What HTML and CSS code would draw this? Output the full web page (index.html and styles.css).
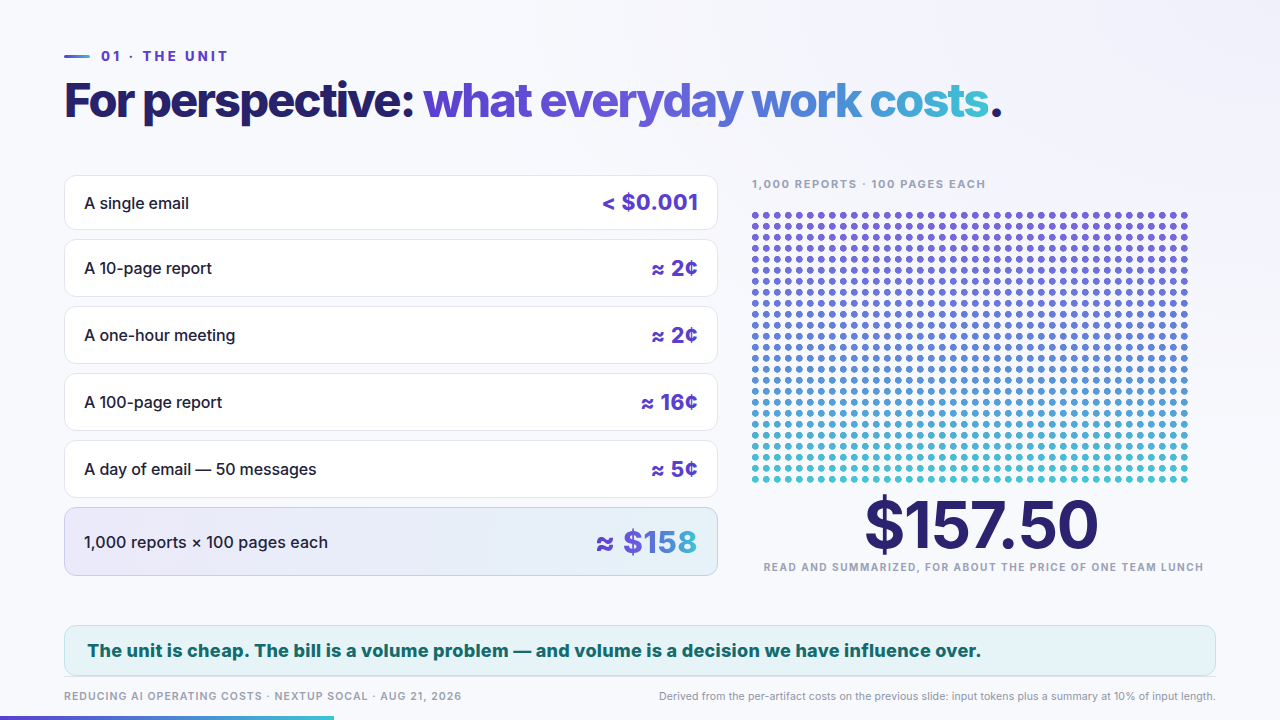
FILE: index.html
```html
<!DOCTYPE html>
<html lang="en">
<head>
<meta charset="utf-8">
<title>For perspective: what everyday work costs</title>
<link rel="stylesheet" href="styles.css">
</head>
<body>
<div class="slide">
  <div class="eyebrow"><span class="eyebrow-line"></span><span class="eyebrow-text">01 · THE UNIT</span></div>
  <h1 class="title">For perspective: <span class="grad">what everyday work costs</span>.</h1>

  <div class="main">
    <div class="rows">
      <div class="row"><span class="row-label">A single email</span><span class="row-value">&lt; $0.001</span></div>
      <div class="row"><span class="row-label">A 10-page report</span><span class="row-value">≈ 2¢</span></div>
      <div class="row"><span class="row-label">A one-hour meeting</span><span class="row-value">≈ 2¢</span></div>
      <div class="row"><span class="row-label">A 100-page report</span><span class="row-value">≈ 16¢</span></div>
      <div class="row"><span class="row-label">A day of email — 50 messages</span><span class="row-value">≈ 5¢</span></div>
      <div class="row row-total"><span class="row-label">1,000 reports × 100 pages each</span><span class="row-value"><span class="grad">≈ $158</span></span></div>
    </div>

    <div class="panel">
      <div class="panel-label">1,000 REPORTS · 100 PAGES EACH</div>
      <div class="dots" role="img" aria-label="1,000 dots, one per report"></div>
      <div class="big">$157.50</div>
      <div class="caption">READ AND SUMMARIZED, FOR ABOUT THE PRICE OF ONE TEAM LUNCH</div>
    </div>
  </div>

  <div class="callout">The unit is cheap. The bill is a volume problem — and volume is a decision we have influence over.</div>

  <div class="footer">
    <span class="footer-left">REDUCING AI OPERATING COSTS · NEXTUP SOCAL · AUG 21, 2026</span>
    <span class="footer-right">Derived from the per-artifact costs on the previous slide: input tokens plus a summary at 10% of input length.</span>
  </div>
  <div class="progress"></div>
</div>
</body>
</html>
```

FILE: styles.css
```css
* { box-sizing: border-box; }
html, body { margin: 0; padding: 0; }
body {
  width: 1280px;
  height: 720px;
  overflow: hidden;
  font-family: Inter, "Noto Sans", sans-serif;
  background: #f8f9fd;
}
.slide {
  width: 1280px;
  height: 720px;
  padding: 48px 64px 0;
  display: flex;
  flex-direction: column;
  background: radial-gradient(ellipse at 100% 0%, #f0f0fb 0%, rgba(248,249,253,0) 45%), #f8f9fd;
}
.eyebrow {
  display: flex;
  align-items: center;
  gap: 11px;
  height: 16px;
}
.eyebrow-line {
  width: 26px;
  height: 3px;
  border-radius: 2px;
  background: linear-gradient(90deg, #5a3fcf, #45b8d8);
}
.eyebrow-text {
  font-size: 13px;
  font-weight: 800;
  letter-spacing: 3.3px;
  color: #5a3fcf;
}
.title {
  margin: 6px 0 0;
  font-size: 47px;
  line-height: 60px;
  font-weight: 800;
  letter-spacing: -1.9px;
  color: #28226a;
}
.grad {
  background: linear-gradient(90deg, #5a3fcf 0%, #6a5cdc 40%, #4f86d8 70%, #3ec5d4 100%);
  -webkit-background-clip: text;
  background-clip: text;
  color: transparent;
}
.main {
  margin-top: 45px;
  display: grid;
  grid-template-columns: 654px 1fr;
  column-gap: 34px;
}
.rows {
  display: flex;
  flex-direction: column;
  gap: 9px;
}
.row {
  height: 58px;
  display: flex;
  align-items: center;
  justify-content: space-between;
  padding: 0 19px;
  background: #ffffff;
  border: 1px solid #e3e5ee;
  border-radius: 12px;
}
.row:first-child { height: 55px; }
.row-label {
  font-size: 16px;
  font-weight: 500;
  color: #22223a;
  letter-spacing: -0.1px;
}
.row-value {
  font-size: 21px;
  font-weight: 800;
  color: #5a3fcf;
  letter-spacing: 0.6px;
}
.row-total {
  height: 69px;
  background: linear-gradient(100deg, #ebe9fa 0%, #e6f2f8 100%);
  border-color: #c9cdea;
}
.row-total .row-label { letter-spacing: 0.1px; }
.row-total .row-value { font-size: 30px; letter-spacing: 0.6px; }
.panel {
  display: flex;
  flex-direction: column;
  align-items: flex-start;
}
.panel-label {
  margin-top: 2px;
  font-size: 11px;
  font-weight: 700;
  letter-spacing: 1.65px;
  color: #9aa1b5;
  line-height: 14px;
}
.dots {
  margin-top: 21px;
  width: 436px;
  height: 271px;
  background: linear-gradient(180deg, #7862dc 0%, #6184d9 50%, #45c6d3 100%);
  -webkit-mask-image: radial-gradient(circle at 3.3px 3.3px, #000 3.1px, transparent 3.7px);
  -webkit-mask-size: 11px 11px;
  mask-image: radial-gradient(circle at 3.3px 3.3px, #000 3.1px, transparent 3.7px);
  mask-size: 11px 11px;
}
.big {
  align-self: stretch;
  text-align: center;
  margin-top: 6px;
  font-size: 64px;
  line-height: 72px;
  font-weight: 700;
  letter-spacing: -1.4px;
  color: #2b2370;
  padding-right: 6px;
}
.caption {
  align-self: stretch;
  text-align: center;
  margin-top: 0;
  font-size: 10px;
  font-weight: 700;
  letter-spacing: 1.55px;
  color: #9aa1b5;
}
.callout {
  margin-top: 49px;
  height: 51px;
  display: flex;
  align-items: center;
  padding: 0 22px;
  background: #e6f4f7;
  border: 1px solid #c3e2e9;
  border-radius: 12px;
  font-size: 18px;
  font-weight: 800;
  letter-spacing: 0.3px;
  color: #146b6e;
}
.footer {
  border-top: 1px solid #e1e3ea;
  height: 38px;
  display: flex;
  align-items: center;
  justify-content: space-between;
  padding-top: 2px;
}
.footer-left {
  font-size: 10.5px;
  font-weight: 600;
  letter-spacing: 1.05px;
  color: #9ba0b0;
}
.footer-right {
  font-size: 10.5px;
  color: #8d93a3;
  letter-spacing: 0.15px;
}
.progress {
  margin: auto 0 0 -64px;
  width: 334px;
  height: 4px;
  background: linear-gradient(90deg, #5a3fcf, #3ec5d4);
}
```
